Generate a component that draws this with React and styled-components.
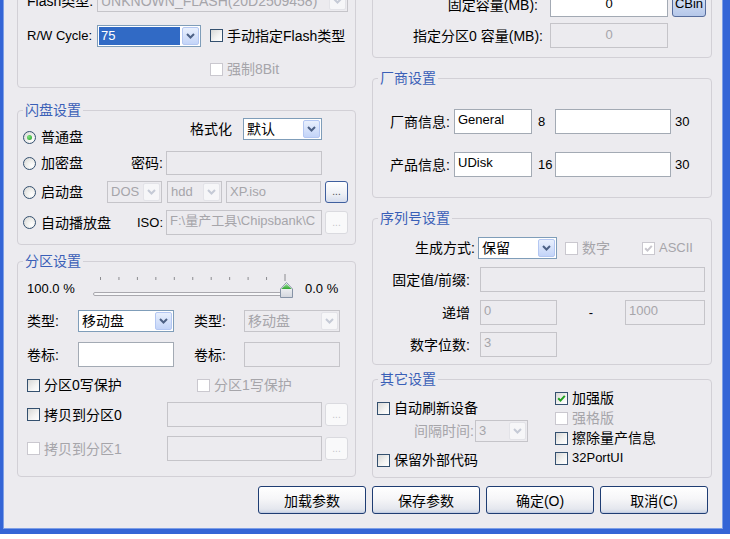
import React from "react";
import styled, { createGlobalStyle, css } from "styled-components";

const C = {
  face: "#ECEBEF",
  groupLine: "#D2D0D6",
  title: "#3A5FB7",
  dis: "#A6A5AA",
  fieldBorder: "#A3AAB4",
  fieldDisBorder: "#C5C4C9",
  frame: "#3465D6",
};

const GlobalStyle = createGlobalStyle`
  html, body { margin: 0; padding: 0; background: #fff; }
  body {
    font-family: "Liberation Sans", "Noto Sans CJK SC", sans-serif;
    font-size: 14px; line-height: 16px; color: #000;
  }
  #root { width: 730px; height: 539px; overflow: hidden; }
  * { box-sizing: border-box; }
`;

const Window = styled.div`
  width: 730px;
  height: 534px;
  background: ${C.face};
  border-left: 3px solid ${C.frame};
  border-right: 7px solid ${C.frame};
  border-bottom: 5px solid ${C.frame};
  box-shadow: inset 1px 0 0 #7E9FE6, inset -1px 0 0 #7E9FE6, inset 0 -1px 0 #7E9FE6;
  overflow: hidden;
  display: flex;
  flex-direction: column;
`;

const Content = styled.div`
  margin-top: -22px;
  padding: 0 11px 0 14px;
  display: flex;
  flex-direction: column;
`;

const Columns = styled.div`
  display: flex;
  gap: 16px;
  align-items: flex-start;
`;

const Column = styled.div`
  width: ${(p) => p.$w}px;
  display: flex;
  flex-direction: column;
`;

const Group = styled.fieldset`
  margin: ${(p) => p.$mt || 0}px 0 0 0;
  padding: 0;
  border: 1px solid ${C.groupLine};
  border-radius: 4px;
  min-width: 0;
`;

const Legend = styled.legend`
  margin-left: 5px;
  padding: 0 2px;
  color: ${C.title};
  font-size: 14px;
  line-height: 16px;
`;

const GroupBody = styled.div`
  padding: ${(p) => p.$pad};
  display: flex;
  flex-direction: ${(p) => (p.$row ? "row" : "column")};
`;

const SubCol = styled.div`
  display: flex;
  flex-direction: column;
  width: ${(p) => (p.$w ? p.$w + "px" : "auto")};
`;

const Row = styled.div`
  display: flex;
  align-items: ${(p) => p.$align || "center"};
  height: ${(p) => p.$h}px;
  margin-top: ${(p) => p.$mt || 0}px;
`;

const Label = styled.span`
  flex: none;
  white-space: nowrap;
  width: ${(p) => (p.$w ? p.$w + "px" : "auto")};
  text-align: ${(p) => (p.$right ? "right" : p.$center ? "center" : "left")};
  padding-right: ${(p) => p.$pr || 0}px;
  padding-left: ${(p) => p.$pl || 0}px;
  margin-left: ${(p) => (p.$auto ? "auto" : (p.$ml || 0) + "px")};
  margin-top: ${(p) => p.$mt || 0}px;
  color: ${(p) => (p.$dis ? C.dis : "#000")};
  font-size: ${(p) => (p.$sm ? 13 : 14)}px;
`;

const Field = styled.div`
  flex: none;
  width: ${(p) => p.$w}px;
  height: ${(p) => p.$h || 25}px;
  margin-left: ${(p) => (p.$auto ? "auto" : (p.$ml || 0) + "px")};
  border: 1px solid ${(p) => (p.$dis ? C.fieldDisBorder : C.fieldBorder)};
  background: ${(p) => (p.$dis ? C.face : "#fff")};
  color: ${(p) => (p.$dis ? C.dis : "#000")};
  font-size: 13px;
  line-height: 16px;
  padding: ${(p) => (p.$center ? "3px 0 0" : "2px 3px 0")};
  text-align: ${(p) => (p.$center ? "center" : "left")};
  white-space: nowrap;
  overflow: hidden;
`;

const ComboBox = styled.div`
  flex: none;
  display: flex;
  width: ${(p) => p.$w}px;
  height: 22px;
  margin-left: ${(p) => (p.$auto ? "auto" : (p.$ml || 0) + "px")};
  border: 1px solid ${(p) => (p.$dis ? C.fieldDisBorder : "#7F9DB9")};
  background: ${(p) => (p.$dis ? C.face : "#fff")};
  padding: 1px;
`;

const ComboText = styled.div`
  flex: 1;
  min-width: 0;
  margin-right: 2px;
  padding: 1px 2px 0;
  font-size: ${(p) => (p.$sm ? 13 : 14)}px;
  color: ${(p) => (p.$dis ? C.dis : "#000")};
  white-space: nowrap;
  overflow: hidden;
  ${(p) =>
    p.$sel &&
    css`
      background: #316ac5;
      color: #fff;
    `}
`;

const ComboArrow = styled.div`
  flex: none;
  width: 17px;
  display: flex;
  align-items: center;
  justify-content: center;
  border: 1px solid ${(p) => (p.$dis ? "#E3E3E8" : "#B4C7F2")};
  border-radius: 2px;
  background: ${(p) =>
    p.$dis ? "#F6F6F8" : "linear-gradient(#E9F0FD, #C3D4F8)"};
`;

const CheckItem = styled.div`
  flex: none;
  display: flex;
  align-items: center;
  gap: 4px;
  height: ${(p) => p.$h || 16}px;
  width: ${(p) => (p.$w ? p.$w + "px" : "auto")};
  margin-left: ${(p) => p.$ml || 0}px;
  margin-top: ${(p) => p.$mt || 0}px;
  color: ${(p) => (p.$dis ? C.dis : "#000")};
  white-space: nowrap;
`;

const Box = styled.span`
  flex: none;
  width: 13px;
  height: 13px;
  border: 1px solid ${(p) => (p.$dis ? "#CAC8CF" : "#34506F")};
  background: ${(p) =>
    p.$dis ? "#fff" : "linear-gradient(135deg, #D8D8D6 0%, #F4F4F3 60%, #fff 100%)"};
  display: flex;
  align-items: center;
  justify-content: center;
`;

const ItemText = styled.span`
  font-size: ${(p) => (p.$sm ? 13 : 14)}px;
`;

const RadioItem = styled.div`
  flex: none;
  display: flex;
  align-items: center;
  gap: 5px;
  height: 16px;
  align-self: ${(p) => (p.$top ? "flex-start" : "center")};
  margin-top: ${(p) => p.$mt || 0}px;
`;

const RadioCircle = styled.span`
  flex: none;
  width: 13px;
  height: 13px;
  border-radius: 50%;
  border: 1px solid #34506F;
  background: radial-gradient(circle at 70% 70%, #fff 0%, #F0F0EE 40%, #D5D5D2 100%);
  display: flex;
  align-items: center;
  justify-content: center;
`;

const RadioDot = styled.span`
  width: 5px;
  height: 5px;
  border-radius: 50%;
  background: radial-gradient(circle at 35% 35%, #7EE07E, #21A121);
`;

const PushButton = styled.button`
  flex: none;
  width: 108px;
  height: 28px;
  padding: 0;
  border: 1px solid #1F3D73;
  border-radius: 3px;
  background: linear-gradient(#ffffff 0%, #f6f6f8 45%, #e4e7ee 85%, #cdd5e5 100%);
  box-shadow: inset 0 -1px 0 #c3cde2;
  font-family: inherit;
  font-size: 14px;
  color: #000;
`;

const SmallButton = styled.div`
  flex: none;
  width: 23px;
  height: ${(p) => p.$h || 23}px;
  margin-left: ${(p) => p.$ml || 0}px;
  border: 1px solid ${(p) => (p.$dis ? "#DADADF" : "#3F5F9E")};
  border-radius: 3px;
  background: ${(p) =>
    p.$dis ? "#F9F9FA" : "linear-gradient(#ffffff, #eef0f5 60%, #d6dded)"};
  color: ${(p) => (p.$dis ? "#C4C4C8" : "#4A4A4A")};
  font-size: 10px;
  line-height: 10px;
  display: flex;
  align-items: flex-end;
  justify-content: center;
  padding-bottom: 5px;
`;

const CBinButton = styled.div`
  flex: none;
  width: 34px;
  height: 25px;
  margin-left: 4px;
  margin-top: -1px;
  border: 1px solid #566C9C;
  border-radius: 3px;
  background: linear-gradient(#DCE6F8, #B5C7E9);
  font-size: 13px;
  display: flex;
  align-items: center;
  justify-content: center;
`;

const Slot = styled.span`
  flex: none;
  width: ${(p) => p.$w}px;
`;

const ButtonRow = styled.div`
  display: flex;
  justify-content: flex-end;
  gap: 6px;
  margin-top: 8px;
  padding-right: 4px;
`;

const Chevron = ({ dis }) => (
  <svg width="9" height="6" viewBox="0 0 9 6">
    <polyline
      points="1,1 4.5,4.5 8,1"
      fill="none"
      stroke={dis ? "#C5CAD6" : "#4D6185"}
      strokeWidth="2"
    />
  </svg>
);

const CheckMark = ({ dis }) => (
  <svg width="9" height="9" viewBox="0 0 9 9">
    <polyline
      points="1.2,4.2 3.5,6.6 7.8,1.8"
      fill="none"
      stroke={dis ? "#C8C6CD" : "#21A121"}
      strokeWidth="2"
    />
  </svg>
);

const Combo = ({ w, ml, auto, dis, sel, sm, children }) => (
  <ComboBox $w={w} $ml={ml} $auto={auto} $dis={dis}>
    <ComboText $dis={dis} $sel={sel} $sm={sm}>
      {children}
    </ComboText>
    <ComboArrow $dis={dis}>
      <Chevron dis={dis} />
    </ComboArrow>
  </ComboBox>
);

const Check = ({ checked, dis, sm, children, ml, mt, h, w }) => (
  <CheckItem $dis={dis} $ml={ml} $mt={mt} $h={h} $w={w}>
    <Box $dis={dis}>{checked && <CheckMark dis={dis} />}</Box>
    <ItemText $sm={sm}>{children}</ItemText>
  </CheckItem>
);

const Radio = ({ checked, top, mt, children }) => (
  <RadioItem $top={top} $mt={mt}>
    <RadioCircle>{checked && <RadioDot />}</RadioCircle>
    <ItemText>{children}</ItemText>
  </RadioItem>
);

const Slider = () => {
  const ticks = [];
  for (let i = 0; i < 11; i++) {
    const x = 12.5 + i * 18.45;
    ticks.push(
      <line
        key={i}
        x1={x}
        x2={x}
        y1={i === 10 ? 5 : 8}
        y2={i === 10 ? 12 : 11}
        stroke="#8C8C90"
        strokeWidth="1"
      />
    );
  }
  return (
    <svg width="206" height="31" viewBox="0 0 206 31" style={{ flex: "none" }}>
      <defs>
        <linearGradient id="thumbBody" x1="0" y1="0" x2="0" y2="1">
          <stop offset="0" stopColor="#ffffff" />
          <stop offset="1" stopColor="#D3D6DD" />
        </linearGradient>
        <linearGradient id="thumbTop" x1="0" y1="0" x2="0" y2="1">
          <stop offset="0" stopColor="#9BE09B" />
          <stop offset="1" stopColor="#2FA52F" />
        </linearGradient>
      </defs>
      {ticks}
      <rect x="5.5" y="23.5" width="192" height="3" rx="1.5" fill="#F7F7F9" stroke="#A9A8AE" />
      <path d="M192.5 20 L198.5 13.5 L204.5 20 V28.5 H192.5 Z" fill="url(#thumbBody)" stroke="#8693A6" />
      <path d="M193.5 20 L198.5 14.8 L203.5 20 Z" fill="url(#thumbTop)" />
    </svg>
  );
};

export default function App() {
  return (
    <>
      <GlobalStyle />
      <Window>
        <Content>
          <Columns>
            <Column $w={339}>
              {/* top (cut) group */}
              <Group>
                <GroupBody $pad="11px 0 10px 9px">
                  <Row $h={22}>
                    <Label $w={70}>Flash类型:</Label>
                    <Combo w={251} dis>
                      UNKNOWN_FLASH(20D2509458)
                    </Combo>
                  </Row>
                  <Row $h={23} $mt={12}>
                    <Label $w={70} $sm>
                      R/W Cycle:
                    </Label>
                    <Combo w={104} sel sm>
                      75
                    </Combo>
                    <Check ml={9}>手动指定Flash类型</Check>
                  </Row>
                  <Row $h={16} $mt={14}>
                    <Check ml={183} dis>
                      强制8Bit
                    </Check>
                  </Row>
                </GroupBody>
              </Group>

              {/* 闪盘设置 */}
              <Group $mt={14}>
                <Legend>闪盘设置</Legend>
                <GroupBody $pad="0 7px 9px 5px">
                  <Row $h={22}>
                    <Radio checked top mt={11}>
                      普通盘
                    </Radio>
                    <Label $auto>格式化</Label>
                    <Combo w={79} ml={11}>
                      默认
                    </Combo>
                    <Slot $w={26} />
                  </Row>
                  <Row $h={24} $mt={11}>
                    <Radio>加密盘</Radio>
                    <Label $auto>密码:</Label>
                    <Field $w={156} $h={24} $ml={3} $dis />
                    <Slot $w={26} />
                  </Row>
                  <Row $h={22} $mt={6}>
                    <Radio>启动盘</Radio>
                    <Combo w={55} auto dis sm>
                      DOS
                    </Combo>
                    <Combo w={55} ml={5} dis sm>
                      hdd
                    </Combo>
                    <Field $w={95} $h={22} $ml={4} $dis>
                      XP.iso
                    </Field>
                    <SmallButton $ml={4} $h={22}>
                      ...
                    </SmallButton>
                  </Row>
                  <Row $h={25} $mt={7}>
                    <Radio>自动播放盘</Radio>
                    <Label $auto $sm>
                      ISO:
                    </Label>
                    <Field $w={156} $ml={3} $dis>
                      F:\量产工具\Chipsbank\C
                    </Field>
                    <SmallButton $ml={3} $dis>
                      ...
                    </SmallButton>
                  </Row>
                </GroupBody>
              </Group>

              {/* 分区设置 */}
              <Group $mt={8}>
                <Legend>分区设置</Legend>
                <GroupBody $pad="0 7px 15px 9px">
                  <Row $h={31} $align="flex-start">
                    <Label $w={61} $sm $mt={12}>
                      100.0 %
                    </Label>
                    <Slider />
                    <Label $ml={11} $sm $mt={12}>
                      0.0 %
                    </Label>
                  </Row>
                  <Row $h={22} $mt={10}>
                    <Label $w={51}>类型:</Label>
                    <Combo w={96}>移动盘</Combo>
                    <Label $w={50} $ml={20}>
                      类型:
                    </Label>
                    <Combo w={96} dis>
                      移动盘
                    </Combo>
                  </Row>
                  <Row $h={25} $mt={10}>
                    <Label $w={51}>卷标:</Label>
                    <Field $w={96} />
                    <Label $w={50} $ml={20}>
                      卷标:
                    </Label>
                    <Field $w={96} $dis />
                  </Row>
                  <Row $h={16} $mt={10}>
                    <Check w={170}>分区0写保护</Check>
                    <Check dis>分区1写保护</Check>
                  </Row>
                  <Row $h={25} $mt={9}>
                    <Check>拷贝到分区0</Check>
                    <Field $w={155} $auto $dis />
                    <SmallButton $ml={3} $dis>
                      ...
                    </SmallButton>
                  </Row>
                  <Row $h={25} $mt={9}>
                    <Check dis>拷贝到分区1</Check>
                    <Field $w={155} $auto $dis />
                    <SmallButton $ml={3} $dis>
                      ...
                    </SmallButton>
                  </Row>
                </GroupBody>
              </Group>
            </Column>

            <Column $w={340}>
              {/* top (cut) group */}
              <Group>
                <GroupBody $pad="13px 0 9px 0">
                  <Row $h={25}>
                    <Label $w={165} $right>
                      固定容量(MB):
                    </Label>
                    <Field $w={118} $ml={12} $center>
                      0
                    </Field>
                    <CBinButton>CBin</CBinButton>
                  </Row>
                  <Row $h={25} $mt={6}>
                    <Label $w={170} $right>
                      指定分区0 容量(MB):
                    </Label>
                    <Field $w={118} $ml={7} $center $dis>
                      0
                    </Field>
                  </Row>
                </GroupBody>
              </Group>

              {/* 厂商设置 */}
              <Group $mt={12}>
                <Legend>厂商设置</Legend>
                <GroupBody $pad="0 0 20px 17px">
                  <Row $h={25} $mt={23}>
                    <Label $w={64}>厂商信息:</Label>
                    <Field $w={78}>General</Field>
                    <Label $w={23} $pl={6} $sm>
                      8
                    </Label>
                    <Field $w={116} />
                    <Label $ml={4} $sm>
                      30
                    </Label>
                  </Row>
                  <Row $h={25} $mt={18}>
                    <Label $w={64}>产品信息:</Label>
                    <Field $w={78}>UDisk</Field>
                    <Label $w={23} $pl={6} $sm>
                      16
                    </Label>
                    <Field $w={116} />
                    <Label $ml={4} $sm>
                      30
                    </Label>
                  </Row>
                </GroupBody>
              </Group>

              {/* 序列号设置 */}
              <Group $mt={12}>
                <Legend>序列号设置</Legend>
                <GroupBody $pad="0 0 7px 0">
                  <Row $h={22} $mt={11}>
                    <Label $w={105} $right $pr={3}>
                      生成方式:
                    </Label>
                    <Combo w={79}>保留</Combo>
                    <Check dis ml={8} w={77}>
                      数字
                    </Check>
                    <Check dis checked sm>
                      ASCII
                    </Check>
                  </Row>
                  <Row $h={25} $mt={8}>
                    <Label $w={107} $right $pr={10}>
                      固定值/前缀:
                    </Label>
                    <Field $w={225} $dis />
                  </Row>
                  <Row $h={25} $mt={8}>
                    <Label $w={107} $right $pr={10}>
                      递增
                    </Label>
                    <Field $w={77} $dis>
                      0
                    </Field>
                    <Label $w={68} $center $sm>
                      -
                    </Label>
                    <Field $w={80} $dis>
                      1000
                    </Field>
                  </Row>
                  <Row $h={25} $mt={7}>
                    <Label $w={107} $right $pr={10}>
                      数字位数:
                    </Label>
                    <Field $w={77} $dis>
                      3
                    </Field>
                  </Row>
                </GroupBody>
              </Group>

              {/* 其它设置 */}
              <Group $mt={6}>
                <Legend>其它设置</Legend>
                <GroupBody $row $pad="0 0 9px 4px">
                  <SubCol $w={178}>
                    <Check mt={13}>自动刷新设备</Check>
                    <Row $h={22} $mt={4}>
                      <Label $ml={37} $w={61} $dis>
                        间隔时间:
                      </Label>
                      <Combo w={53} dis sm>
                        3
                      </Combo>
                    </Row>
                    <Check mt={10}>保留外部代码</Check>
                  </SubCol>
                  <SubCol>
                    <Check checked h={20} mt={1}>
                      加强版
                    </Check>
                    <Check dis h={20}>
                      强格版
                    </Check>
                    <Check h={20}>擦除量产信息</Check>
                    <Check h={20} sm>
                      32PortUI
                    </Check>
                  </SubCol>
                </GroupBody>
              </Group>
            </Column>
          </Columns>

          <ButtonRow>
            <PushButton>加载参数</PushButton>
            <PushButton>保存参数</PushButton>
            <PushButton>确定(O)</PushButton>
            <PushButton>取消(C)</PushButton>
          </ButtonRow>
        </Content>
      </Window>
    </>
  );
}
